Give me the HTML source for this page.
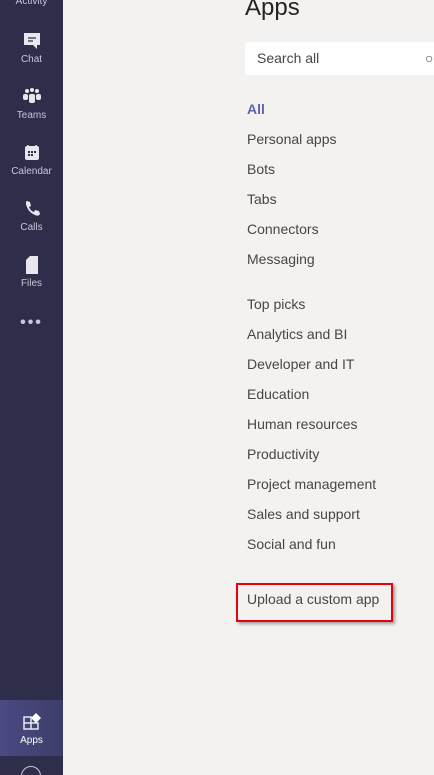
<!DOCTYPE html><html><head><style>
html,body{margin:0;width:434px;height:775px;overflow:hidden}
body{background:#f3f2f1;font-family:"Liberation Sans",sans-serif;position:relative}
.sb{position:absolute;left:0;top:0;width:63px;height:775px;background:#2f2e4a}
.it{position:absolute;left:0;width:63px;text-align:center;color:#c8c6d8;font-size:10px}
.it svg{display:block;margin:0 auto 3px}
.act{position:absolute;left:0;top:700px;width:63px;height:56px;background:linear-gradient(90deg,#4a4a82,#3d3d6a)}
h1{position:absolute;left:245px;top:-6px;margin:0;font-weight:normal;font-size:24px;color:#252423}
.search{position:absolute;left:245px;top:42px;width:200px;height:33px;background:#fff;border-radius:4px;font-size:14px;color:#484644;line-height:33px;padding-left:12px;box-sizing:border-box}
.l{position:absolute;left:247px;font-size:14px;color:#484644}
.box{position:absolute;left:236px;top:583px;width:157px;height:39px;border:2px solid #e8000a;box-sizing:border-box;box-shadow:2px 2px 3px rgba(0,0,0,.35)}
</style></head><body>
<div class="sb"></div>
<div class="act"></div>
<div class="it" style="top:-4px">Activity</div>
<div class="it" style="top:31px"><svg width="20" height="20" viewBox="0 0 20 20"><path d="M2 2h16v12h-3v4l-4-4H2z" fill="#e8e7f0"/><path d="M6 7h8M6 10h5" stroke="#2f2e4a" stroke-width="1.3"/></svg>Chat</div>
<div class="it" style="top:87px"><svg width="22" height="20" viewBox="0 0 22 20"><circle cx="6" cy="4" r="2" fill="#e8e7f0"/><circle cx="11" cy="3" r="2" fill="#e8e7f0"/><circle cx="16" cy="4" r="2" fill="#e8e7f0"/><rect x="2" y="7" width="5" height="6" rx="2" fill="#e8e7f0"/><rect x="15" y="7" width="5" height="6" rx="2" fill="#e8e7f0"/><rect x="8" y="7" width="6" height="9" rx="2" fill="#e8e7f0"/></svg>Teams</div>
<div class="it" style="top:143px"><svg width="20" height="20" viewBox="0 0 20 20"><rect x="3" y="3" width="14" height="14" rx="2" fill="#e8e7f0"/><path d="M6 2v3M14 2v3" stroke="#e8e7f0" stroke-width="1.5"/><rect x="6" y="8" width="2" height="2" fill="#2f2e4a"/><rect x="9" y="8" width="2" height="2" fill="#2f2e4a"/><rect x="12" y="8" width="2" height="2" fill="#2f2e4a"/><rect x="6" y="11" width="2" height="2" fill="#2f2e4a"/><rect x="9" y="11" width="2" height="2" fill="#2f2e4a"/></svg>Calendar</div>
<div class="it" style="top:199px"><svg width="20" height="20" viewBox="0 0 20 20"><path d="M5 2l3 1 1 4-2 1c1 2 2 4 5 5l1-2 4 1 1 3c-1 2-3 2-5 1C8 14 5 10 4 5c0-2 0-3 1-3z" fill="#e8e7f0"/></svg>Calls</div>
<div class="it" style="top:255px"><svg width="20" height="20" viewBox="0 0 20 20"><path d="M4 5l4-4h8v18H4z" fill="#e8e7f0"/></svg>Files</div>
<div class="it" style="top:314px;font-size:16px;letter-spacing:2px;font-weight:bold">•••</div>
<div class="it" style="top:712px;color:#fff"><svg width="20" height="20" viewBox="0 0 20 20"><path d="M2 5h7v12H2zM2 11h14v6H9" fill="none" stroke="#e8e7f0" stroke-width="1.5"/><path d="M14 1l5 5-5 5-5-5z" fill="#fff"/></svg>Apps</div>
<div style="position:absolute;left:21px;top:766px;width:18px;height:18px;border:1.5px solid #c8c6d8;border-radius:50%"></div>
<h1>Apps</h1>
<div class="search">Search all<span style="position:absolute;left:180px;top:0">○</span></div>
<div class="l" style="top:101px;color:#6264a7;font-weight:bold">All</div>
<div class="l" style="top:131px">Personal apps</div>
<div class="l" style="top:161px">Bots</div>
<div class="l" style="top:191px">Tabs</div>
<div class="l" style="top:221px">Connectors</div>
<div class="l" style="top:251px">Messaging</div>
<div class="l" style="top:296px">Top picks</div>
<div class="l" style="top:326px">Analytics and BI</div>
<div class="l" style="top:356px">Developer and IT</div>
<div class="l" style="top:386px">Education</div>
<div class="l" style="top:416px">Human resources</div>
<div class="l" style="top:446px">Productivity</div>
<div class="l" style="top:476px">Project management</div>
<div class="l" style="top:506px">Sales and support</div>
<div class="l" style="top:536px">Social and fun</div>
<div class="l" style="top:591px">Upload a custom app</div>
<div class="box"></div>
</body></html>
